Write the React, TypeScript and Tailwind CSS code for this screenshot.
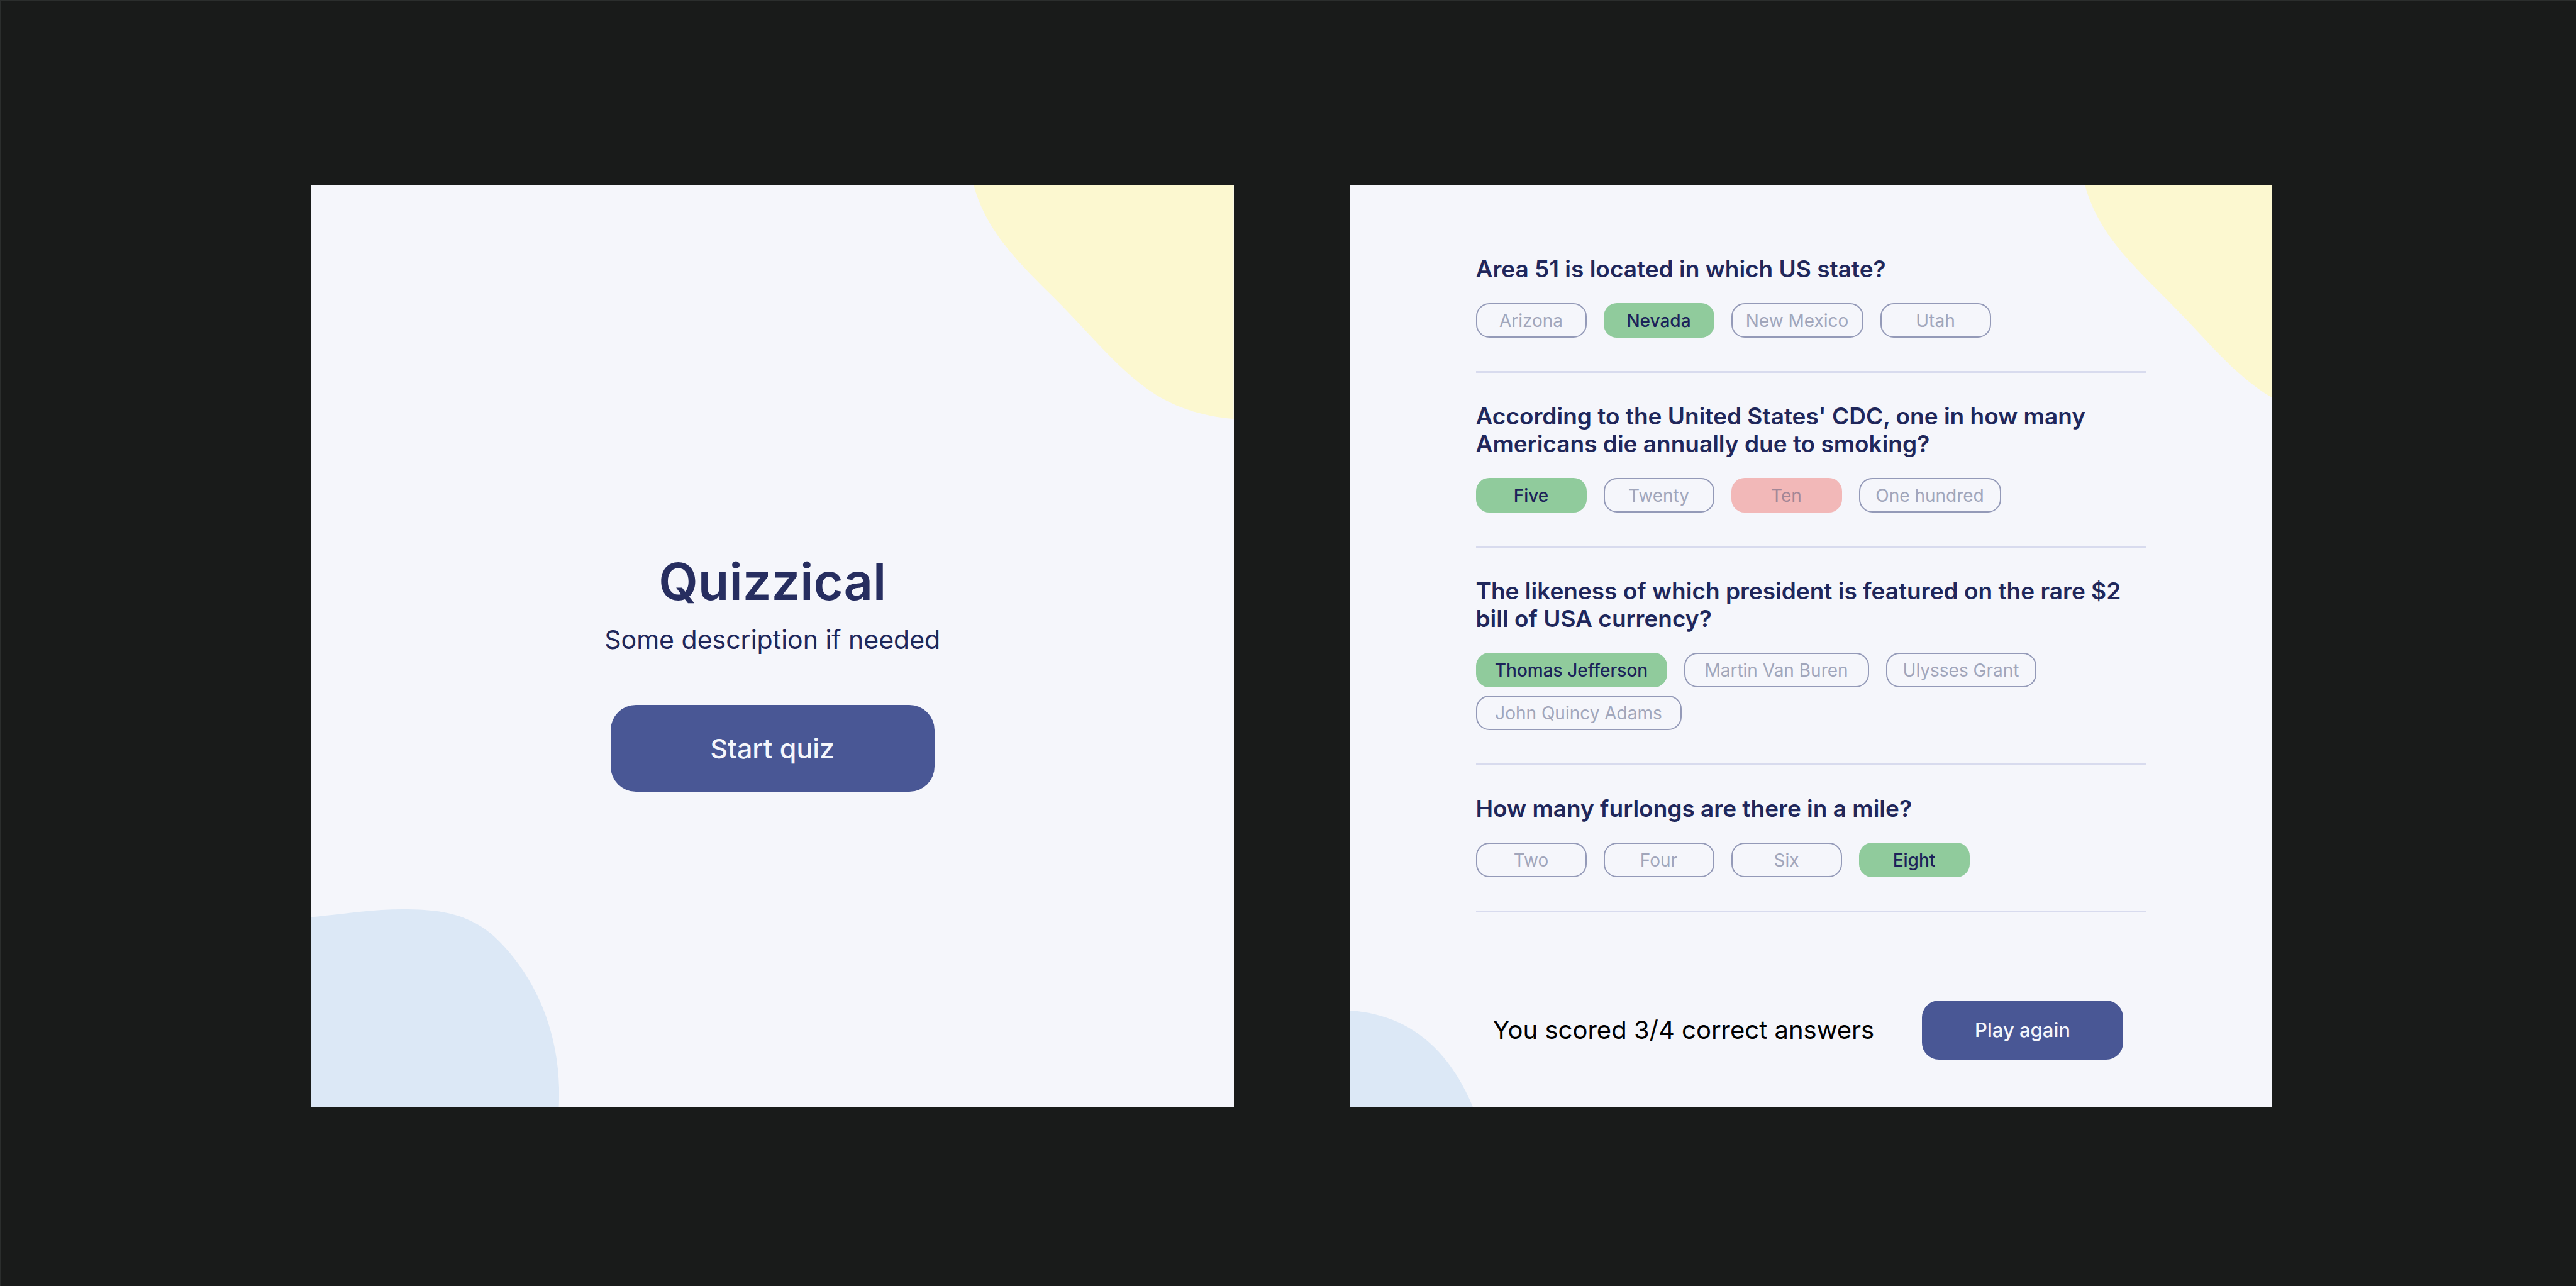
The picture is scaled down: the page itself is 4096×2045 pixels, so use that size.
type Status = "idle" | "correct" | "wrong";

type Option = {
  label: string;
  status?: Status;
  width?: string;
};

type Question = {
  text: string;
  options: Option[];
};

const questions: Question[] = [
  {
    text: "Area 51 is located in which US state?",
    options: [
      { label: "Arizona" },
      { label: "Nevada", status: "correct" },
      { label: "New Mexico", width: "w-[210px]" },
      { label: "Utah" },
    ],
  },
  {
    text: "According to the United States' CDC, one in how many Americans die annually due to smoking?",
    options: [
      { label: "Five", status: "correct" },
      { label: "Twenty" },
      { label: "Ten", status: "wrong" },
      { label: "One hundred", width: "w-[226px]" },
    ],
  },
  {
    text: "The likeness of which president is featured on the rare $2 bill of USA currency?",
    options: [
      { label: "Thomas Jefferson", status: "correct", width: "w-[304px]" },
      { label: "Martin Van Buren", width: "w-[294px]" },
      { label: "Ulysses Grant", width: "w-[239px]" },
      { label: "John Quincy Adams", width: "w-[327px]" },
    ],
  },
  {
    text: "How many furlongs are there in a mile?",
    options: [
      { label: "Two" },
      { label: "Four" },
      { label: "Six" },
      { label: "Eight", status: "correct" },
    ],
  },
];

const statusClasses: Record<Status, string> = {
  idle: "border-2 border-[#949ab8] text-[#a1a6bb]",
  correct: "bg-[#90cb9c] font-medium text-[#1c2259]",
  wrong: "bg-[#f2b8b8] text-[#a38797]",
};

const YELLOW_BLOB =
  "M0 0 C60 220 200 370 393 561 C600 765 720 925 893 1051 C1030 1150 1180 1195 1344 1209 V0 Z";

function OptionButton({ label, status = "idle", width = "w-[176px]" }: Option) {
  return (
    <button
      type="button"
      className={`flex h-[55px] items-center justify-center rounded-[21px] text-[28px] leading-none whitespace-nowrap ${width} ${statusClasses[status]}`}
    >
      {label}
    </button>
  );
}

function QuestionBlock({ text, options }: Question) {
  return (
    <section className="border-b-3 border-[#d8dbee] pb-[53px]">
      <h2 className="text-[37px] leading-[44px] font-semibold text-[#20275b]">{text}</h2>
      <div className="mt-8 flex flex-wrap gap-x-[27px] gap-y-[13px]">
        {options.map((option) => (
          <OptionButton key={option.label} {...option} />
        ))}
      </div>
    </section>
  );
}

function StartScreen() {
  return (
    <section className="relative flex aspect-square flex-col items-center justify-center overflow-hidden bg-[#f5f6fb] pt-[82px]">
      <svg viewBox="0 0 1344 1209" className="absolute top-0 right-0 w-[28.2%]" aria-hidden="true">
        <path d={YELLOW_BLOB} fill="#fcf8d0" />
      </svg>
      <svg viewBox="0 0 1283 1022" className="absolute bottom-0 left-0 w-[26.9%]" aria-hidden="true">
        <path
          d="M0 40 C170 25 310 0 473 0 C660 0 810 20 945 140 C1150 330 1300 640 1280 1022 H0 Z"
          fill="#dce8f6"
        />
      </svg>
      <h1 className="relative text-[81px] leading-[96px] font-semibold text-[#272e60]">Quizzical</h1>
      <p className="relative mt-5 text-[41px] leading-[48px] text-[#20275b]">Some description if needed</p>
      <button
        type="button"
        className="relative mt-20 h-[138px] w-[515px] rounded-[40px] bg-[#495795] text-[43px] font-medium text-[#f5f6fb]"
      >
        Start quiz
      </button>
    </section>
  );
}

function ResultsScreen() {
  return (
    <section className="relative aspect-square overflow-hidden bg-[#f5f6fb] px-[200px] pt-[112px]">
      <svg viewBox="0 0 966 1097" className="absolute top-0 right-0 w-[20.3%]" aria-hidden="true">
        <path d={YELLOW_BLOB} fill="#fcf8d0" />
      </svg>
      <svg viewBox="0 0 211 166" className="absolute bottom-0 left-0 w-[13.3%]" aria-hidden="true">
        <path d="M0 0 C90 6 165 55 211 166 H0 Z" fill="#dce8f6" />
      </svg>
      <div className="relative flex flex-col gap-[47px]">
        {questions.map((question) => (
          <QuestionBlock key={question.text} {...question} />
        ))}
      </div>
      <footer className="relative mt-[140px] flex items-center justify-between pr-[37px] pl-[27px]">
        <p className="text-[40px] leading-[48px] text-black">You scored 3/4 correct answers</p>
        <button
          type="button"
          className="h-[94px] w-[320px] rounded-[27px] bg-[#495795] text-[31px] font-medium text-[#f5f6fb]"
        >
          Play again
        </button>
      </footer>
    </section>
  );
}

export default function App() {
  return (
    <main className="grid min-h-screen grid-cols-2 content-start gap-[185px] border-t border-l border-[#2b2e2d] bg-[#191b1a] pt-[293px] pr-[483px] pl-[494px] font-['Inter',sans-serif]">
      <StartScreen />
      <ResultsScreen />
    </main>
  );
}
